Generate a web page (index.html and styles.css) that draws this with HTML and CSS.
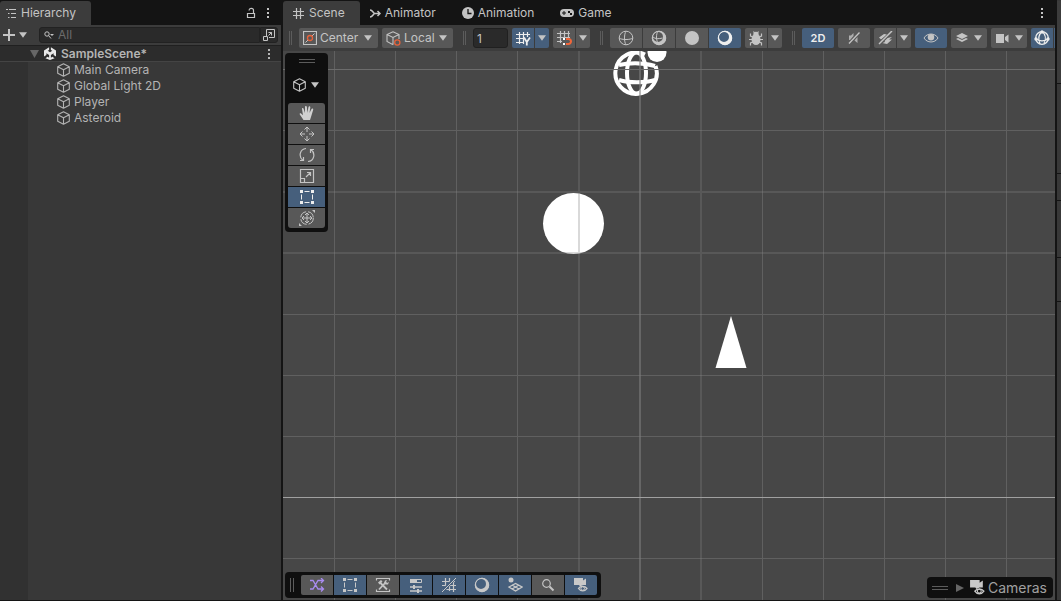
FILE: index.html
```html
<!DOCTYPE html>
<html lang="en">
<head>
<meta charset="utf-8">
<title>SampleScene - Editor</title>
<link rel="stylesheet" href="styles.css">
</head>
<body>
<svg class="symbols" aria-hidden="true">
  <symbol id="cube" viewBox="0 0 14 14"><path d="M7.500 .8 13.300 3.700V10.300L7.500 13.300 1.700 10.300V3.700ZM1.700 3.700 7.500 6.800 13.300 3.700M7.500 6.800V13.300" fill="none" stroke="currentColor" stroke-width="1.100" stroke-linejoin="round"/></symbol>
  <symbol id="dots" viewBox="0 0 4 12"><path d="M1 1h2v2H1zM1 5h2v2H1zM1 9h2v2H1z" fill="currentColor"/></symbol>
  <symbol id="down" viewBox="0 0 8 6"><path d="M0 .3h8L4 5.800z" fill="currentColor"/></symbol>
  <symbol id="shaded" viewBox="0 0 16 16"><path fill-rule="evenodd" d="M8 .8a7.2 7.2 0 1 0 0 14.4A7.2 7.2 0 0 0 8 .8ZM7 1.9a5 5 0 1 1 0 10 5 5 0 0 1 0-10Z" fill="currentColor"/><circle cx="8" cy="8" r="6.7" fill="none" stroke="currentColor"/></symbol>
  <symbol id="rect" viewBox="0 0 16 16"><path d="M1 1h3v3H1zM12 1h3v3h-3zM1 12h3v3H1zM12 12h3v3h-3z" fill="currentColor"/><path d="M5.5 2.5h5M5.5 13.5h5M2.5 5.5v5M13.5 5.5v5" stroke="currentColor"/></symbol>
  <symbol id="cameye" viewBox="0 0 16 16"><path d="M1 1h9v2.500l3-2V8H10L7 9.500 6 8H1z" fill="currentColor"/><path d="M5.500 11.500c2-2.800 6.500-2.800 8.500 0-2 3.200-6.500 3.200-8.500 0Z" fill="none" stroke="currentColor" stroke-width="1.300"/><circle cx="9.700" cy="11.500" r="1.800" fill="none" stroke="currentColor"/></symbol>
</svg>
<div class="editor">
  <section class="panel hierarchy">
    <div class="tabbar">
      <button class="tab on"><svg width="11" height="10" viewBox="0 0 11 10"><path d="M0 1.500h2M3 1.500h7M2 5.500h1.500M5 5.500h5M2 9.500h1.500M5 9.500h5" stroke="currentColor"/></svg>Hierarchy</button>
      <button class="plain push" aria-label="Lock"><svg width="10" height="12" viewBox="0 0 10 12"><path d="M1.500 6.500h7v4h-7zM7.500 6V3.500a2.200 2.200 0 0 0-4.400 0" fill="none" stroke="currentColor" stroke-width="1.200"/></svg></button>
      <button class="plain menu" aria-label="Hierarchy menu"><svg width="4" height="12"><use href="#dots"/></svg></button>
    </div>
    <div class="searchbar">
      <button class="plain add" aria-label="Add"><svg width="12" height="12" viewBox="0 0 12 12"><path d="M6 0v12M0 6h12" stroke="currentColor" stroke-width="2"/></svg><svg width="8" height="6"><use href="#down"/></svg></button>
      <label class="search"><svg width="10" height="8" viewBox="0 0 10 8"><circle cx="3" cy="3" r="2.200" fill="none" stroke="currentColor"/><path d="M4.600 4.600 7 7.500" stroke="currentColor"/><path d="M6 3h4L8 5z" fill="currentColor"/></svg><input type="text" placeholder="All" aria-label="Search hierarchy"></label>
      <button class="expand" aria-label="Open search"><svg width="12" height="12" viewBox="0 0 12 12"><path d="M3.500 7V.5h8v8H6M.5 7.500h4v4h-4zM5.500 6.500l3-3M5.500 3.500h3v3" fill="none" stroke="currentColor"/></svg></button>
    </div>
    <div class="tree">
      <div class="scene-row"><svg class="fold" width="9" height="8" viewBox="0 0 9 8"><path d="M0 0h9L4.500 8z" fill="#666"/></svg><svg width="12" height="13" viewBox="0 0 12 13"><path d="M5.100.3V3L3.700 3.800 6 5.200l2.300-1.400L6.900 3V.3L12 3.400v6L9.600 8V6.300L6.900 7.900v2.800l1.400-.9 2.300 1.400L6 13l-4.600-1.800 2.300-1.400 1.400.9V7.900L2.400 6.300V8L0 9.400v-6z" fill="#e8e8e8"/></svg><strong>SampleScene*</strong><button class="plain menu" aria-label="Scene menu"><svg width="4" height="12"><use href="#dots"/></svg></button></div>
      <ul>
        <li><svg width="14" height="14"><use href="#cube"/></svg>Main Camera</li>
        <li><svg width="14" height="14"><use href="#cube"/></svg>Global Light 2D</li>
        <li><svg width="14" height="14"><use href="#cube"/></svg>Player</li>
        <li><svg width="14" height="14"><use href="#cube"/></svg>Asteroid</li>
      </ul>
    </div>
  </section>

  <main class="panel scene">
    <div class="tabbar">
      <button class="tab on"><svg width="11" height="11" viewBox="0 0 11 11"><path d="M3.500 0v11M7.500 0v11M0 3.500h11M0 7.500h11" stroke="currentColor" stroke-width="1.200"/></svg>Scene</button>
      <button class="tab"><svg width="11" height="9" viewBox="0 0 11 9"><path d="M0 1c3 0 3 3.500 5 3.500h5M0 8c3 0 3-3.500 5-3.500M7.500 2 10 4.500 7.500 7" fill="none" stroke="currentColor" stroke-width="1.500"/></svg>Animator</button>
      <button class="tab"><svg width="12" height="12" viewBox="0 0 12 12"><circle cx="6" cy="6" r="6" fill="currentColor"/><path d="M6 2v4.500h3.500" fill="none" stroke="#141414" stroke-width="1.300"/></svg>Animation</button>
      <button class="tab"><svg width="14" height="8" viewBox="0 0 14 8"><rect width="14" height="8" rx="4" fill="currentColor"/><path d="M2 4h4M4 2v4" stroke="#141414"/><path d="M8 2h2v2H8zM10 4h2v2h-2z" fill="#141414"/></svg>Game</button>
      <button class="plain menu push" aria-label="Scene view menu"><svg width="4" height="12"><use href="#dots"/></svg></button>
    </div>

    <div class="toolbar">
      <i class="grip"></i>
      <label class="pick center"><svg width="14" height="14" viewBox="0 0 14 14"><path d="M.5.5h13v13H.5z" fill="none" stroke="currentColor" stroke-width="1.200"/><path d="M2.500 11.500 5 9M9 5l2.500-2.500" stroke="currentColor"/><circle cx="7" cy="7" r="2.500" fill="none" stroke="#e8623a" stroke-width="1.300"/></svg><select aria-label="Tool handle position"><option>Center</option></select><svg width="8" height="6"><use href="#down"/></svg></label>
      <label class="pick local"><svg width="15" height="15" viewBox="0 0 15 15"><path d="M7 .8 13 3.500V8M7.500 13 6.500 13.400 1 10.500V3.500L7 .8M1 3.500l6 3 6-3M7 6.500V13" fill="none" stroke="currentColor" stroke-width="1.100"/><circle cx="11.300" cy="11.500" r="2.600" fill="none" stroke="#e8623a" stroke-width="1.300"/></svg><select aria-label="Tool handle rotation"><option>Local</option></select><svg width="8" height="6"><use href="#down"/></svg></label>
      <i class="grip"></i>
      <input class="snap" type="text" value="1" aria-label="Grid size">
      <div class="group"><button class="btn half on" aria-label="Grid axis"><svg width="15" height="15" viewBox="0 0 15 15"><path d="M3.500 1v12M7.500 1v12M11.500 1v5M0 3.500h14M0 7.500h8M0 11.500h8" stroke="currentColor" stroke-width="1.200"/><path d="M8 6.500 10.800 11v3.500M14 6.500 10.800 11" fill="none" stroke="currentColor" stroke-width="1.800"/></svg></button><button class="btn drop on" aria-label="Grid options"><svg width="8" height="6"><use href="#down"/></svg></button></div>
      <div class="group"><button class="btn half" aria-label="Grid snapping"><svg width="15" height="15" viewBox="0 0 15 15"><path d="M3.500 0v12M7.500 0v6M11.500 0v6M0 2.500h13M0 6.500h13M0 10.500h5" stroke="currentColor" stroke-width="1.200"/><path d="M6 7h2v2H6zM6 12h2v2H6z" fill="#fff"/><path d="M9 8h2.500a2.500 2.500 0 0 1 0 5H9" fill="none" stroke="#f0663a" stroke-width="2"/></svg></button><button class="btn drop" aria-label="Snap options"><svg width="8" height="6"><use href="#down"/></svg></button></div>
      <i class="grip"></i>
      <div class="group">
        <button class="btn" aria-label="Wireframe"><svg width="16" height="16" viewBox="0 0 16 16"><circle cx="8" cy="8" r="6.800" fill="none" stroke="currentColor"/><path d="M1.200 8c2 2 11.600 2 13.600 0M8 1.200c-2 3-2 10.500 0 13.600" fill="none" stroke="currentColor"/></svg></button>
        <button class="btn" aria-label="Shaded wireframe"><svg width="16" height="16"><use href="#shaded"/><path d="M2 7c2 2 6 2 9.500 1M7 1c-2 3-2 9 0 12" fill="none" stroke="currentColor"/></svg></button>
        <button class="btn" aria-label="Unlit"><svg width="16" height="16" viewBox="0 0 16 16"><circle cx="8" cy="8" r="7" fill="currentColor"/></svg></button>
        <button class="btn on" aria-label="Shaded"><svg width="16" height="16"><use href="#shaded"/></svg></button>
      </div>
      <div class="group"><button class="btn half" aria-label="Debug draw"><svg width="14" height="15" viewBox="0 0 14 15"><ellipse cx="7" cy="8.500" rx="4.500" ry="5.500" fill="currentColor"/><circle cx="7" cy="3.500" r="2.700" fill="currentColor"/><path d="M4.500.5 5.500 2M9.500.5 8.500 2M4 6 1.500 5V2.500M10 6l2.500-1V2.500M0 8.500h14M4 11l-2.500 1v2.500M10 11l2.500 1v2.500" fill="none" stroke="currentColor" stroke-width="1.200"/></svg></button><button class="btn drop" aria-label="Debug options"><svg width="8" height="6"><use href="#down"/></svg></button></div>
      <i class="grip"></i>
      <button class="btn on two">2D</button>
      <button class="btn" aria-label="Scene audio"><svg width="12" height="12" viewBox="0 0 12 12"><path d="M1 3.500h2L5.500 1v3L2 8H1zM9.500 5v6L6.500 8.500z" fill="currentColor" opacity=".8"/><path d="M1 11.500 11.500.5" stroke="currentColor" stroke-width="1.300"/></svg></button>
      <div class="group"><button class="btn half" aria-label="Effects"><svg width="15" height="14" viewBox="0 0 15 14"><path d="M1 6.500 6 3l3 .5-6 5zM6 9l3-2 5-1-3 2.500h3L9 13l-5-1 3-1z" fill="currentColor"/><path d="M1.500 13 14 .5" stroke="#585858" stroke-width="3"/><path d="M1 13 14 0" stroke="currentColor" stroke-width="1.500"/></svg></button><button class="btn drop" aria-label="Effects options"><svg width="8" height="6"><use href="#down"/></svg></button></div>
      <button class="btn on" aria-label="Scene visibility"><svg width="16" height="10" viewBox="0 0 16 10"><path d="M1 5c3-5.300 11-5.300 14 0-3 5.300-11 5.300-14 0Z" fill="none" stroke="#c4c4c4"/><circle cx="8" cy="4.300" r="3.200" fill="#c4c4c4"/></svg></button>
      <button class="btn wide" aria-label="Layers"><svg width="12" height="10" viewBox="0 0 12 10"><path d="m0 3 6-3 6 3-6 3zM0 6l2-1 4 2 4-2 2 1-6 3z" fill="currentColor"/></svg><svg width="8" height="6"><use href="#down"/></svg></button>
      <button class="btn wide" aria-label="Camera settings"><svg width="13" height="9" viewBox="0 0 13 9"><path d="M0 0h8v9H0zM9 3l3.500-2.500v8L9 6z" fill="currentColor"/></svg><svg width="8" height="6"><use href="#down"/></svg></button>
      <div class="group"><button class="btn half on" aria-label="Gizmos"><svg width="16" height="16" viewBox="0 0 16 16"><circle cx="8" cy="8" r="6.300" fill="none" stroke="currentColor" stroke-width="1.300"/><path d="M8 1.500C4 5 4 9 6 14M8 1.500c4 3 4 8 2 12M1.500 8.500c4 3 9 3 13 0" fill="none" stroke="currentColor" stroke-width="1.200"/><circle cx="8" cy="2" r="1.700" fill="currentColor"/><circle cx="2" cy="9" r="1.700" fill="currentColor"/><circle cx="14" cy="9" r="1.700" fill="currentColor"/></svg></button><button class="btn drop on" aria-label="Gizmo options"></button></div>
    </div>

    <div class="viewport">
      <svg class="canvas" width="100%" height="100%">
        <g fill="#fff"><circle cx="290.500" cy="172.500" r="30.500"/><path d="M448 265 463.500 317h-31z"/><circle cx="374" cy="1.500" r="9.500"/></g>
        <g fill="none" stroke="#fff" stroke-width="4"><path d="M362 3.500A20.700 20.700 0 1 0 372.500 15"/><ellipse cx="353.500" cy="22" rx="9.500" ry="20.500"/><path d="M336 14c8-2 23-3 36 1M336 29c10 3 26 3 36 0"/></g>
        <g class="grid"><path d="M51.500 0v549M112.500 0v549M173.500 0v549M234.500 0v549M479.500 0v549M540.500 0v549M601.500 0v549M662.500 0v549M723.500 0v549"/><path d="M0 79.500h3000M0 263.500h3000M0 324.500h3000M0 385.500h3000M0 507.500h3000"/></g>
        <g class="grid soft"><path d="M296 0v549M418 0v549M0 141h3000M0 202h3000"/></g>
        <path class="axis" d="M357 0v549"/><path class="row" d="M0 18.500h3000"/><path class="origin" d="M0 446.500h3000"/>
      </svg>

      <div class="overlay tools">
        <i class="grip flat"></i>
        <button class="plain view" aria-label="View mode"><svg width="14" height="14"><use href="#cube"/></svg><svg width="8" height="6"><use href="#down"/></svg></button>
        <div class="stack">
          <button class="btn" aria-label="Hand"><svg width="16" height="16" viewBox="0 0 16 16"><path d="M4.500 15 .8 9.500c-.5-1 .7-1.700 1.500-.8L4 10.300 3 4c-.2-1.300 1.300-1.500 1.600-.3L6 8V2c0-1.300 1.800-1.300 1.900 0l.4 5.700L9.500 2c.3-1.300 2-.9 1.800.4L10.500 8l2-4c.5-1 2-.5 1.700.7L12 12l-1 3z" fill="#d0d0d0"/></svg></button>
          <button class="btn" aria-label="Move"><svg width="16" height="16" viewBox="0 0 16 16"><path d="M8 1.500V6M8 10v4.500M1.500 8H6M10 8h4.500M5.500 3.500 8 1l2.500 2.500M5.500 12.500 8 15l2.500-2.500M3.500 5.500 1 8l2.500 2.500M12.500 5.500 15 8l-2.500 2.500" fill="none" stroke="currentColor"/></svg></button>
          <button class="btn" aria-label="Rotate"><svg width="16" height="16" viewBox="0 0 16 16"><path d="M7 1.500c-6 .5-8 8-3 12M9 14.500c6-.5 8-8 3-12M1 13.500h3.500V10M15 2.500h-3.500V6" fill="none" stroke="currentColor" stroke-width="1.200"/></svg></button>
          <button class="btn" aria-label="Scale"><svg width="16" height="16" viewBox="0 0 16 16"><path d="M1.500 1.500h13v13h-13zM1.500 10.500h4v4M7 9l4.500-4.500M8 4.500h3.500V8" fill="none" stroke="currentColor" stroke-width="1.200"/></svg></button>
          <button class="btn on" aria-label="Rect"><svg width="16" height="16"><use href="#rect"/></svg></button>
          <button class="btn" aria-label="Transform"><svg width="16" height="16" viewBox="0 0 16 16"><circle cx="8" cy="8" r="6.300" fill="none" stroke="currentColor" stroke-dasharray="8 2"/><path d="M8 3v10M3 8h10M6 5l2-2 2 2M6 11l2 2 2-2M5 6 3 8l2 2M11 6l2 2-2 2" fill="none" stroke="currentColor"/><path d="M13 0h3v3zM0 13v3h3z" fill="currentColor"/></svg></button>
        </div>
      </div>

      <div class="overlay bottom">
        <i class="grip"></i>
        <div class="group">
          <button class="btn" aria-label="Shuffle"><svg width="16" height="14" viewBox="0 0 16 14"><path d="M1 2.500h3L9 11h5M1 11h3l5-8.500h5M12 0l2.500 2.500L12 5M12 8.500l2.500 2.500L12 13.500" fill="none" stroke="#a98cf0" stroke-width="1.300"/></svg></button>
          <button class="btn on" aria-label="Rect tool"><svg width="16" height="16"><use href="#rect"/></svg></button>
          <button class="btn" aria-label="Component tools"><svg width="16" height="16" viewBox="0 0 16 16"><path d="M1.500 3.500v-2h13v2M1.500 12.500v2h13v-2" fill="none" stroke="currentColor" stroke-width="1.200"/><path d="M5 5.500 12 12.500M11 5l-7 7.500" stroke="currentColor" stroke-width="1.800"/><path d="M3 5.500 6 3l1.500 1.500-3 3zM10 3.500 12 3l-1 2 1 1 2-1-1 2.500h-2.500L9 6z" fill="currentColor"/></svg></button>
          <button class="btn on" aria-label="Settings"><svg width="14" height="16" viewBox="0 0 14 16"><path d="M1.500 2.500h11v3h-11z" fill="none" stroke="currentColor"/><path d="M1 2h7v4H1zM4 8h2v4H4zM8 12h2v4H8z" fill="currentColor"/><path d="M1 10h12M1 14h12" stroke="currentColor" stroke-width="1.300"/></svg></button>
          <button class="btn on" aria-label="Grid and snap"><svg width="16" height="16" viewBox="0 0 16 16"><path d="M4.500 1v12M8.500 1v13M12.500 2v13M1 4.500h13M1 8.500h14M1 12.500h14" stroke="currentColor" stroke-width="1.200"/><path d="M1 15 15 0" stroke="#465f7c" stroke-width="3"/><path d="M1 15 15 1" stroke="currentColor"/></svg></button>
          <button class="btn on" aria-label="Draw modes"><svg width="16" height="16"><use href="#shaded"/></svg></button>
          <button class="btn on" aria-label="View options"><svg width="16" height="16" viewBox="0 0 16 16"><circle cx="4" cy="3" r="2.500" fill="currentColor"/><path d="m2 10 6.500-3.500L15 10l-6.500 4zM5 8l7 4M12 8l-7 4" fill="none" stroke="currentColor" stroke-width="1.300"/></svg></button>
          <button class="btn" aria-label="Search"><svg width="14" height="14" viewBox="0 0 14 14"><circle cx="5.500" cy="5.500" r="3.800" fill="none" stroke="currentColor" stroke-width="1.200"/><path d="m8.500 8.500 4 4" stroke="currentColor" stroke-width="2"/></svg></button>
          <button class="btn on" aria-label="Cameras overlay"><svg width="16" height="16"><use href="#cameye"/></svg></button>
        </div>
      </div>

      <button class="overlay cameras"><i class="grip flat"></i><svg width="8" height="8" viewBox="0 0 8 8"><path d="M0 0 8 4 0 8z" fill="#666"/></svg><svg width="17" height="17"><use href="#cameye"/></svg>Cameras</button>
    </div>
  </main>

  <aside class="panel side"><i class="s1"></i><i class="s2"></i><i class="s3"></i><i class="s4"></i><i class="s5"></i></aside>
</div>
</body>
</html>
```
FILE: styles.css
```css
* { box-sizing: border-box; }
body { margin: 0; background: #141414; color: #c4c4c4; font: 12px/16px Inter, "Liberation Sans", sans-serif; }
button, input, select { font: inherit; color: inherit; border: 0; padding: 0; margin: 0; background: none; }
svg { flex: none; display: block; }
.symbols { position: absolute; width: 0; height: 0; }
.editor { display: flex; gap: 2px; height: 100vh; padding-bottom: 1px; overflow: hidden; }
.panel { display: flex; flex-direction: column; min-width: 0; }
.hierarchy { flex: 0 0 281px; background: #383838; }
.scene { flex: 1; }

.tabbar { display: flex; align-items: center; height: 25px; padding-top: 1px; background: #141414; flex: none; }
.tab { display: flex; align-items: center; gap: 4px; height: 24px; padding: 0 16px 0 10px; border-radius: 3px 3px 0 0; }
.tab.on { background: #3c3c3c; padding-right: 15px; }
.hierarchy .tab { padding-left: 6px; }
.scene .tab.on { gap: 5px; }
.plain { display: flex; align-items: center; justify-content: center; }
.push { margin-left: auto; }
.menu { width: 14px; height: 16px; }
.hierarchy .tabbar { padding-right: 6px; }
.hierarchy .push { margin-right: 5px; }
.scene .tabbar { padding-right: 6px; }

.searchbar { display: flex; align-items: center; height: 20px; padding: 0 3px; background: #3c3c3c; flex: none; }
.add { gap: 4px; margin-right: 12px; }
.search { flex: 1; display: flex; align-items: center; gap: 4px; height: 16px; padding-left: 4px; background: #2a2a2a; border: 1px solid #222; border-radius: 3px 0 0 3px; min-width: 0; }
.search input { flex: 1; min-width: 0; outline: 0; height: 14px; }
.search input::placeholder { color: #6c6c6c; opacity: 1; }
.expand { display: flex; align-items: center; justify-content: center; width: 18px; height: 16px; background: #2a2a2a; border: 1px solid #222; border-radius: 0 3px 3px 0; }
.tree { flex: 1; background: linear-gradient(to right, #313131 28px, #383838 28px); color: #b4b4b4; }
.scene-row { display: flex; align-items: center; gap: 5px; height: 17px; padding: 0 5px 0 30px; background: #2c2c2c; border-top: 1px solid #202020; border-bottom: 1px solid #444; }
.scene-row strong { flex: 1; font-weight: 600; }
.tree ul { margin: 0; padding: 0 0 0 56px; list-style: none; }
.tree li { display: flex; align-items: center; gap: 4px; height: 16px; }

.toolbar { display: flex; align-items: center; gap: 4px; height: 26px; padding-left: 6px; background: #3c3c3c; overflow: hidden; flex: none; }
.toolbar > * { flex: none; }
.grip { width: 3px; height: 14px; border: solid #5c5c5c; border-width: 0 1px; margin: 0 3px 0 6px; }
.grip:first-child { margin-left: 0; }
.grip.flat { width: 16px; height: 4px; border-width: 1px 0; margin: 0; }
.pick { display: flex; align-items: center; height: 20px; padding: 0 6px 0 4px; background: #585858; border-radius: 2px; }
.center { width: 79px; }
.local { width: 71px; }
.pick select { flex: 1; min-width: 0; appearance: none; margin-left: 3px; }
.snap { width: 35px; height: 20px; padding-left: 3px; background: #2a2a2a; border: 1px solid #202020; border-radius: 3px; }
.group { display: flex; gap: 1px; }
.btn { display: flex; align-items: center; justify-content: center; width: 32px; height: 20px; background: #585858; border-radius: 2px; }
.group .btn { border-radius: 0; }
.group .btn:first-child { border-radius: 2px 0 0 2px; }
.group .btn:last-child { border-radius: 0 2px 2px 0; }
.btn.on { background: #465f7c; color: #eee; }
.group .half { width: 22px; }
.group .drop { width: 14px; }
.group .drop.on { color: #c4c4c4; }
.wide { width: 36px; gap: 6px; }
.two { font-size: 11px; font-weight: 600; }

.viewport { position: relative; flex: 1; min-height: 0; background: #474747; overflow: hidden; }
.canvas { position: absolute; inset: 0; }
.grid { fill: none; stroke: #606060; }
.soft { stroke: #808080; stroke-opacity: .3; stroke-width: 2; }
.axis { stroke: #808080; stroke-opacity: .55; stroke-width: 2; }
.row { stroke: #6c6c6c; }
.origin { stroke: #a0a0a0; }
.overlay { position: absolute; background: #0f0f0f; border-radius: 4px; }
.tools { left: 2px; top: 2px; display: flex; flex-direction: column; align-items: center; padding: 6px 3px 4px; }
.view { gap: 5px; height: 40px; padding: 4px 2px 0 0; }
.stack { display: flex; flex-direction: column; gap: 1px; }
.stack .btn { width: 37px; border-radius: 0; }
.stack .btn:first-child { border-radius: 3px 3px 0 0; }
.stack .btn:last-child { border-radius: 0 0 3px 3px; }
.bottom { left: 2px; bottom: 2px; display: flex; align-items: center; padding: 3px 4px 3px 5px; }
.bottom .grip { width: 4px; margin-right: 7px; }
.bottom .on { color: #c8c8c8; }
.cameras { right: 2px; bottom: 2px; display: flex; align-items: center; height: 21px; padding: 0 6px 0 5px; font-size: 14px; color: #a0a0a0; }
.cameras .grip { margin-right: 8px; }
.cameras svg { margin-right: 2px; color: #c8c8c8; }
.cameras svg:nth-of-type(1) { margin-right: 5px; }

.side { flex: 0 0 4px; padding-top: 1px; background: #383838; }
.side i { border-bottom: 1px solid #141414; flex: none; }
.s1 { height: 83px; background: #3c3c3c; }
.s2 { height: 90px; }
.s3 { height: 27px; }
.s4 { height: 57px; }
.s5 { height: 44px; }
```
